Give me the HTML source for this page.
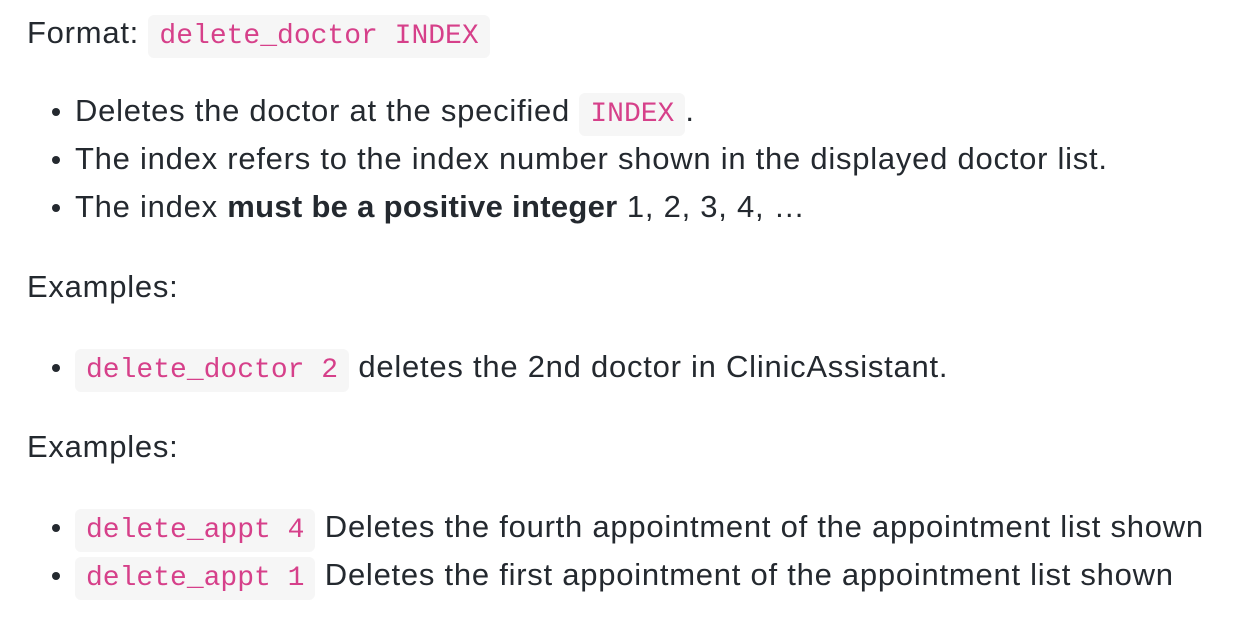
<!DOCTYPE html>
<html><head><meta charset="utf-8"><style>
body{margin:0;width:1248px;height:628px;background:#fff;font-family:"Liberation Sans",Arial,sans-serif;font-size:31px;letter-spacing:0.75px;color:#24292f;position:relative;overflow:hidden}
.l{position:absolute;left:27px;height:48px;line-height:48px;white-space:nowrap}
.li{left:75px}
.li:before{content:"";position:absolute;left:-23px;top:21px;width:8px;height:8px;border-radius:50%;background:#24292f}
code{font-family:"Liberation Mono",monospace;font-size:28px;letter-spacing:0;color:#d6408a;background:#f6f6f6;border-radius:6px;padding:6px 11px}
b{font-weight:bold;letter-spacing:0.3px}
</style></head><body>
<div class="l" style="top:9px">Format: <code>delete_doctor INDEX</code></div>
<div class="l li" style="top:87px">Deletes the doctor at the specified <code>INDEX</code>.</div>
<div class="l li" style="top:135px">The index refers to the index number shown in the displayed doctor list.</div>
<div class="l li" style="top:183px">The index <b>must be a positive integer</b> 1, 2, 3, 4, <span style="letter-spacing:-2px">…</span></div>
<div class="l" style="top:263px">Examples:</div>
<div class="l li" style="top:343px"><code>delete_doctor 2</code> deletes the 2nd doctor in ClinicAssistant.</div>
<div class="l" style="top:423px">Examples:</div>
<div class="l li" style="top:503px"><code>delete_appt 4</code> Deletes the fourth appointment of the appointment list shown</div>
<div class="l li" style="top:551px"><code>delete_appt 1</code> Deletes the first appointment of the appointment list shown</div>
</body></html>
